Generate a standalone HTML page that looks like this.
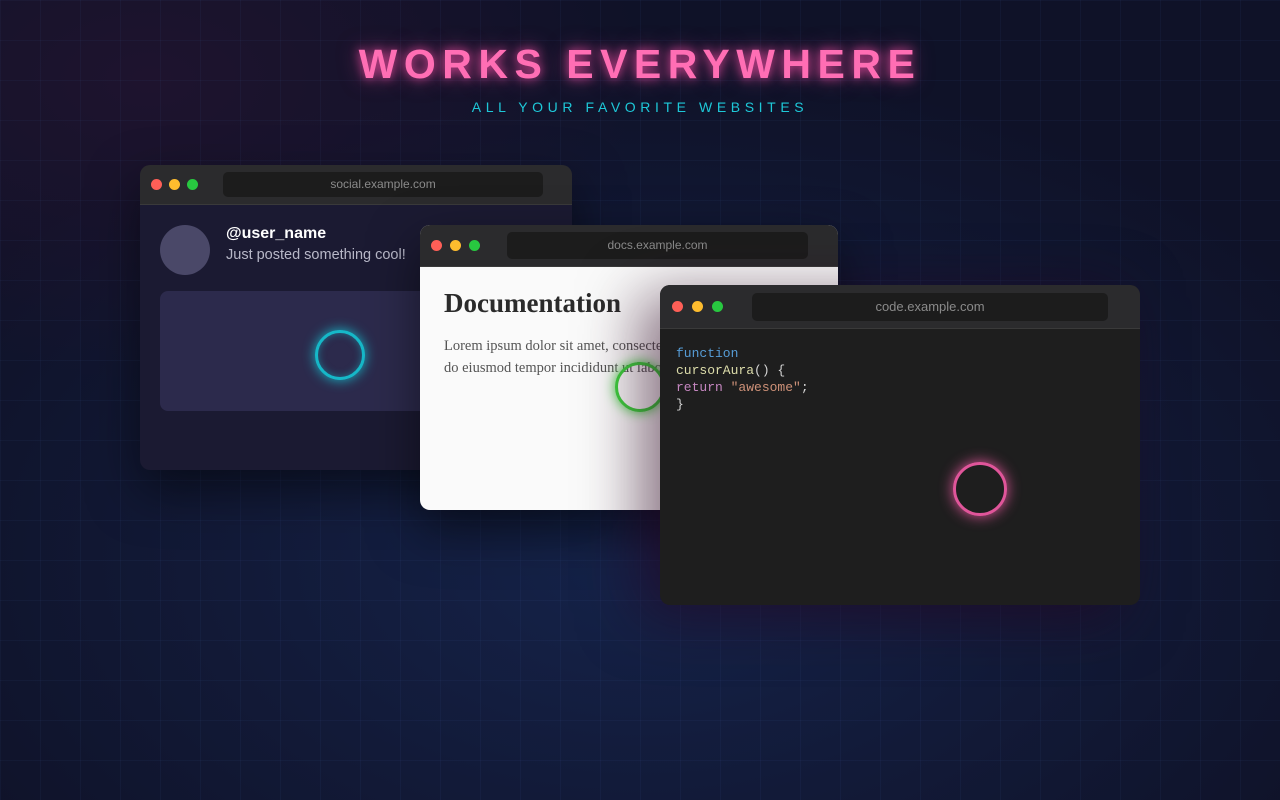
<!DOCTYPE html>
<html><head><style>
*{margin:0;padding:0;box-sizing:border-box}
body{width:1280px;height:800px;overflow:hidden;position:relative;font-family:"Liberation Sans",sans-serif;
background:radial-gradient(ellipse 800px 500px at 640px 560px,#15234a 0%,#121a38 50%,#0f1228 100%);}
.glow{position:absolute;inset:0;background:radial-gradient(ellipse 500px 300px at 150px 80px,rgba(40,20,50,.6),transparent)}
.grid{position:absolute;inset:0;background-image:linear-gradient(rgba(80,120,200,.06) 1px,transparent 1px),linear-gradient(90deg,rgba(80,120,200,.06) 1px,transparent 1px);background-size:40px 40px}
h1{position:absolute;top:41px;left:0;width:1280px;text-align:center;font-size:41px;font-weight:bold;letter-spacing:6.5px;color:#ff6eb4;text-shadow:0 0 10px rgba(255,80,170,.8),0 0 22px rgba(255,80,170,.5)}
.sub{position:absolute;top:99px;left:0;width:1280px;text-align:center;font-size:14px;letter-spacing:4.6px;color:#1ec8d8}
.win{position:absolute;border-radius:10px;overflow:hidden;box-shadow:0 20px 50px rgba(0,0,0,.5)}
.tb{background:#2b2b2d;position:relative;border-bottom:1px solid #3a3a3a}
.d{position:absolute;width:11px;height:11px;border-radius:50%}
.url{position:absolute;background:#1c1c1c;border-radius:5px;color:#8a8a8a;font-size:12px;text-align:center}
.ring{position:absolute;border-radius:50%}
</style></head><body>
<div class="glow"></div>
<div class="grid"></div>
<h1>WORKS EVERYWHERE</h1>
<div class="sub">ALL YOUR FAVORITE WEBSITES</div>

<div class="win" style="left:140px;top:165px;width:432px;height:305px;background:#1b1a32">
 <div class="tb" style="height:40px"><span class="d" style="left:11px;top:14px;background:#ff5f57"></span><span class="d" style="left:29px;top:14px;background:#febc2e"></span><span class="d" style="left:47px;top:14px;background:#28c840"></span>
 <div class="url" style="left:83px;top:7px;width:320px;height:25px;line-height:25px">social.example.com</div></div>
 <div style="position:absolute;left:20px;top:60px;width:50px;height:50px;border-radius:50%;background:#4a4868"></div>
 <div style="position:absolute;left:86px;top:60px;color:#fff;font-weight:bold;font-size:16px">@user_name</div>
 <div style="position:absolute;left:86px;top:82px;color:#b8b8c8;font-size:14.5px">Just posted something cool!</div>
 <div style="position:absolute;left:20px;top:126px;width:400px;height:120px;border-radius:8px;background:#2c2a4c"></div>
 <div class="ring" style="left:175px;top:165px;width:50px;height:50px;border:3px solid #16b8c8;box-shadow:0 0 12px #16b8c8,inset 0 0 8px rgba(22,184,200,.5)"></div>
</div>

<div class="win" style="left:420px;top:225px;width:418px;height:285px;background:#fafafa">
 <div class="tb" style="height:42px"><span class="d" style="left:11px;top:15px;background:#ff5f57"></span><span class="d" style="left:30px;top:15px;background:#febc2e"></span><span class="d" style="left:49px;top:15px;background:#28c840"></span>
 <div class="url" style="left:87px;top:7px;width:301px;height:27px;line-height:27px">docs.example.com</div></div>
 <div style="position:absolute;left:24px;top:63px;font-family:'Liberation Serif',serif;font-weight:bold;font-size:27px;color:#2b2b2b">Documentation</div>
 <div style="position:absolute;left:24px;top:110px;width:400px;font-family:'Liberation Serif',serif;font-size:14.5px;line-height:22px;color:#555;white-space:nowrap">Lorem ipsum dolor sit amet, consectetur<br>do eiusmod tempor incididunt ut labore</div>
 <div class="ring" style="left:195px;top:137px;width:50px;height:50px;border:3px solid #3ed43e;box-shadow:0 0 12px #3ed43e"></div>
</div>

<div class="win" style="left:660px;top:285px;width:480px;height:320px;background:#1e1e1e;box-shadow:-20px 10px 60px rgba(40,0,30,.55)">
 <div class="tb" style="height:44px"><span class="d" style="left:12px;top:16px;background:#ff5f57"></span><span class="d" style="left:32px;top:16px;background:#febc2e"></span><span class="d" style="left:52px;top:16px;background:#28c840"></span>
 <div class="url" style="left:92px;top:8px;width:356px;height:28px;line-height:28px;font-size:13px">code.example.com</div></div>
 <div style="position:absolute;left:16px;top:60px;font-family:'Liberation Mono','DejaVu Sans Mono',monospace;font-size:13px;line-height:17px;color:#d4d4d4">
 <span style="color:#569cd6">function</span><br><span style="color:#dcdcaa">cursorAura</span>() {<br><span style="color:#c586c0">return</span> <span style="color:#ce9178">"awesome"</span>;<br>}</div>
 <div class="ring" style="left:293px;top:177px;width:54px;height:54px;border:3px solid #e0559a;box-shadow:0 0 14px #e0559a"></div>
</div>
</body></html>
